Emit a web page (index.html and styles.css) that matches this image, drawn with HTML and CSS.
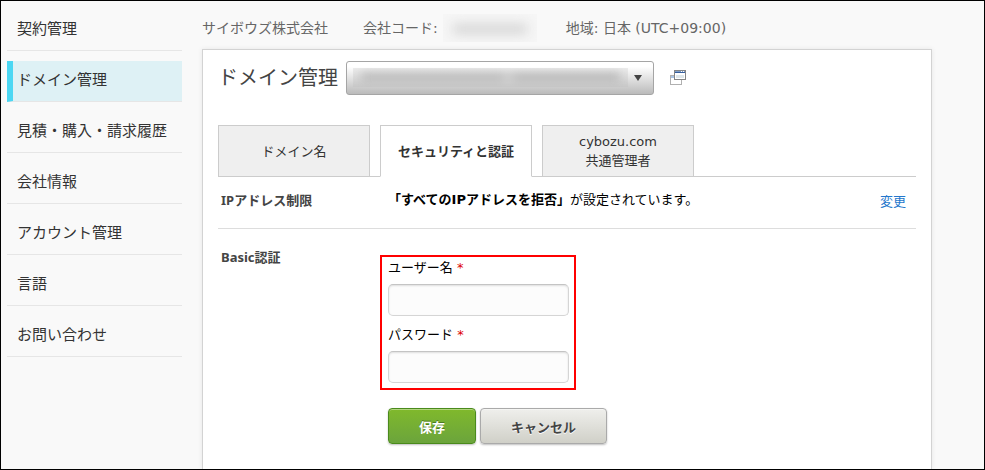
FILE: index.html
```html
<!DOCTYPE html>
<html lang="ja">
<head>
    <meta charset="UTF-8">
    <meta name="viewport" content="width=device-width, initial-scale=1.0">
    <title>ドメイン管理</title>
    <link rel="stylesheet" href="styles.css">
</head>
<body>
    <nav class="sidebar">
        <a href="#">契約管理</a>
        <a href="#" class="active">ドメイン管理</a>
        <a href="#">見積・購入・請求履歴</a>
        <a href="#">会社情報</a>
        <a href="#">アカウント管理</a>
        <a href="#">言語</a>
        <a href="#">お問い合わせ</a>
    </nav>

    <main class="main">
        <header class="company">
            <span>サイボウズ株式会社</span>
            <span class="code">会社コード: <span class="masked"></span></span>
            <span>地域: 日本 (UTC+09:00)</span>
        </header>

        <section class="panel">
            <div class="title">
                <h1>ドメイン管理</h1>
                <div class="domain">
                    <select aria-label="ドメイン">
                        <option></option>
                    </select>
                    <span class="domain-mask"></span>
                    <svg class="arrow" width="8" height="6" viewBox="0 0 8 6"><path d="M0 0h8L4 6z" fill="#444"/></svg>
                </div>
                <a href="#" class="window" aria-label="別ウィンドウで開く">
                    <svg width="16" height="16" viewBox="0 0 16 16">
                        <rect x="0.5" y="5.500" width="11" height="9" fill="#fff" stroke="#b0b0b0"/>
                        <path d="M1 6h3v2H1z" fill="#a9c4e4"/>
                        <rect x="4.500" y="0.500" width="11" height="9" fill="#fff" stroke="#858585"/>
                        <path d="M5 1h10v1H5z" fill="#7f9cc4"/>
                        <path d="M5 2h10v1H5z" fill="#365f9e"/>
                        <path d="M11 1h1v1h-1zM13 1h1v1h-1z" fill="#fff"/>
                        <path d="M6 5h8v3H6z" fill="#dfe7ea"/>
                    </svg>
                </a>
            </div>

            <div class="tabs">
                <a href="#">ドメイン名</a>
                <a href="#" class="current">セキュリティと認証</a>
                <a href="#">cybozu.com<br>共通管理者</a>
            </div>

            <div class="row">
                <h2>IPアドレス制限</h2>
                <p><b>「すべてのIPアドレスを拒否」</b>が設定されています。</p>
                <a href="#" class="change">変更</a>
            </div>

            <form class="row basic">
                <h2>Basic認証</h2>
                <div>
                    <div class="fields">
                        <label for="user">ユーザー名 <span class="required">*</span></label>
                        <input type="text" id="user">
                        <label for="password">パスワード <span class="required">*</span></label>
                        <input type="password" id="password">
                    </div>
                    <div class="buttons">
                        <button type="button" class="save">保存</button>
                        <button type="button" class="cancel">キャンセル</button>
                    </div>
                </div>
            </form>
        </section>
    </main>
</body>
</html>
```

FILE: styles.css
```css
* {
    box-sizing: border-box;
}

body {
    margin: 0;
    min-height: 100vh;
    display: flex;
    gap: 20px;
    padding: 0 52px 0 6px;
    border: 1px solid #000;
    background-color: #f9f9f9;
    color: #000;
    font-family: "DejaVu Sans", "Noto Sans CJK JP", sans-serif;
    font-size: 13px;
    line-height: 20px;
}

a {
    text-decoration: none;
}

h1, h2, p {
    margin: 0;
}

h2, button {
    font-family: "Noto Sans", "Noto Sans CJK JP", sans-serif;
}

/* Left menu */
.sidebar {
    flex: 0 0 175px;
    display: flex;
    flex-direction: column;
    gap: 10px;
    padding-top: 9px;
}

.sidebar a {
    height: 41px;
    padding-left: 10px;
    border-bottom: 1px solid #e6e6e6;
    color: #333;
    font-size: 15px;
    line-height: 38px;
}

.sidebar .active {
    padding-left: 4px;
    border-left: 6px solid #4bd7f3;
    background-color: #def1f5;
    background-clip: padding-box;
}

.main {
    flex: 1;
    display: flex;
    flex-direction: column;
}

.company {
    display: flex;
    align-items: center;
    gap: 35px;
    height: 48px;
    padding-top: 5px;
    color: #666;
    font-size: 14px;
    white-space: nowrap;
}

.code {
    display: flex;
    gap: 5px;
    margin-right: -6px;
}

.masked {
    width: 94px;
    height: 28px;
    margin: -4px 0;
    overflow: hidden;
    background-color: #f6f6f6;
}

.masked::before {
    content: "";
    display: block;
    height: 10px;
    margin: 10px 10px;
    background-color: #d4d4d4;
    filter: blur(6px);
}

/* White panel */
.panel {
    flex: 1;
    padding: 11px 15px 0;
    border: 1px solid #d3d3d3;
    border-bottom: 0;
    background-color: #fff;
    box-shadow: 0 0 5px rgba(0, 0, 0, 0.08);
    clip-path: inset(-5px -5px 0);
}

.title {
    display: flex;
    align-items: center;
    height: 34px;
}

h1 {
    margin-right: 8px;
    color: #444;
    font-size: 20px;
    font-weight: normal;
}

.domain {
    position: relative;
    width: 308px;
    height: 34px;
}

.domain select {
    appearance: none;
    width: 100%;
    height: 100%;
    border: 1px solid #a5a5a5;
    border-radius: 3px;
    background: linear-gradient(#fff 15%, #bbb);
}

.domain-mask {
    position: absolute;
    top: 7px;
    left: 7px;
    width: 275px;
    height: 19px;
    overflow: hidden;
    background: linear-gradient(#ececec, #c8c8c8);
    pointer-events: none;
}

.domain-mask::before {
    content: "";
    display: block;
    height: 9px;
    margin: 5px 8px;
    background: linear-gradient(90deg, #bababa 54%, #cfcfcf 57%, #b8b8b8 60%);
    filter: blur(5px);
}

.arrow {
    position: absolute;
    top: 14px;
    right: 12px;
    pointer-events: none;
}

.window {
    height: 16px;
    margin-left: 16px;
}

.window svg {
    display: block;
}

/* Tabs */
.tabs {
    display: flex;
    gap: 10px;
    margin-top: 30px;
    border-bottom: 1px solid #ccc;
}

.tabs a {
    display: flex;
    align-items: center;
    justify-content: center;
    width: 152px;
    height: 52px;
    margin-bottom: -1px;
    border: 1px solid #ccc;
    background-color: #efefef;
    color: #333;
    line-height: 19px;
    text-align: center;
}

.tabs .current {
    border-bottom-color: #fff;
    background-color: #fff;
    font-weight: bold;
}

/* Setting rows */
.row {
    display: flex;
    padding: 13px 10px 18px 3px;
    border-bottom: 1px solid #ddd;
}

.row h2 {
    flex: 0 0 159px;
    color: #444;
    font-size: 13px;
    line-height: 20px;
}

.row p {
    flex: 1;
    height: 20px;
    padding-left: 8px;
}

.change {
    height: 20px;
    padding-top: 2px;
    color: #2477cc;
}

.basic {
    padding-top: 18px;
    padding-bottom: 23px;
    border-bottom: 0;
}

.fields {
    width: 196px;
    margin-top: 8px;
    padding: 1px 5px 5px 6px;
    border: 2px solid #f00;
}

.fields label {
    display: block;
    height: 20px;
    margin-bottom: 6px;
}

.required {
    color: #d00;
}

.fields input {
    display: block;
    width: 181px;
    height: 32px;
    padding: 0 8px;
    border: 1px solid #d5d5d5;
    border-top-color: #c4c4c4;
    border-radius: 5px;
    background-color: #fcfcfc;
    box-shadow: inset 0 1px 2px rgba(0, 0, 0, 0.12);
}

.fields input + label {
    margin-top: 9px;
}

.buttons {
    display: flex;
    gap: 4px;
    margin-top: 18px;
    padding-left: 8px;
}

button {
    height: 36px;
    border: 1px solid #aaa;
    border-radius: 4px;
    font-size: 13px;
    font-weight: bold;
    box-shadow: inset 0 1px 0 rgba(255, 255, 255, 0.4), 0 1px 2px rgba(0, 0, 0, 0.25);
}

.save {
    width: 88px;
    border-color: #4a8a1c;
    background: linear-gradient(#80b92c, #6ba43c);
    color: #fff;
    text-shadow: 0 -1px 0 #4a7a20;
}

.cancel {
    width: 127px;
    background: linear-gradient(#efefec, #d0d0c8);
    color: #444;
    text-shadow: 0 1px 0 #fff;
}
```
